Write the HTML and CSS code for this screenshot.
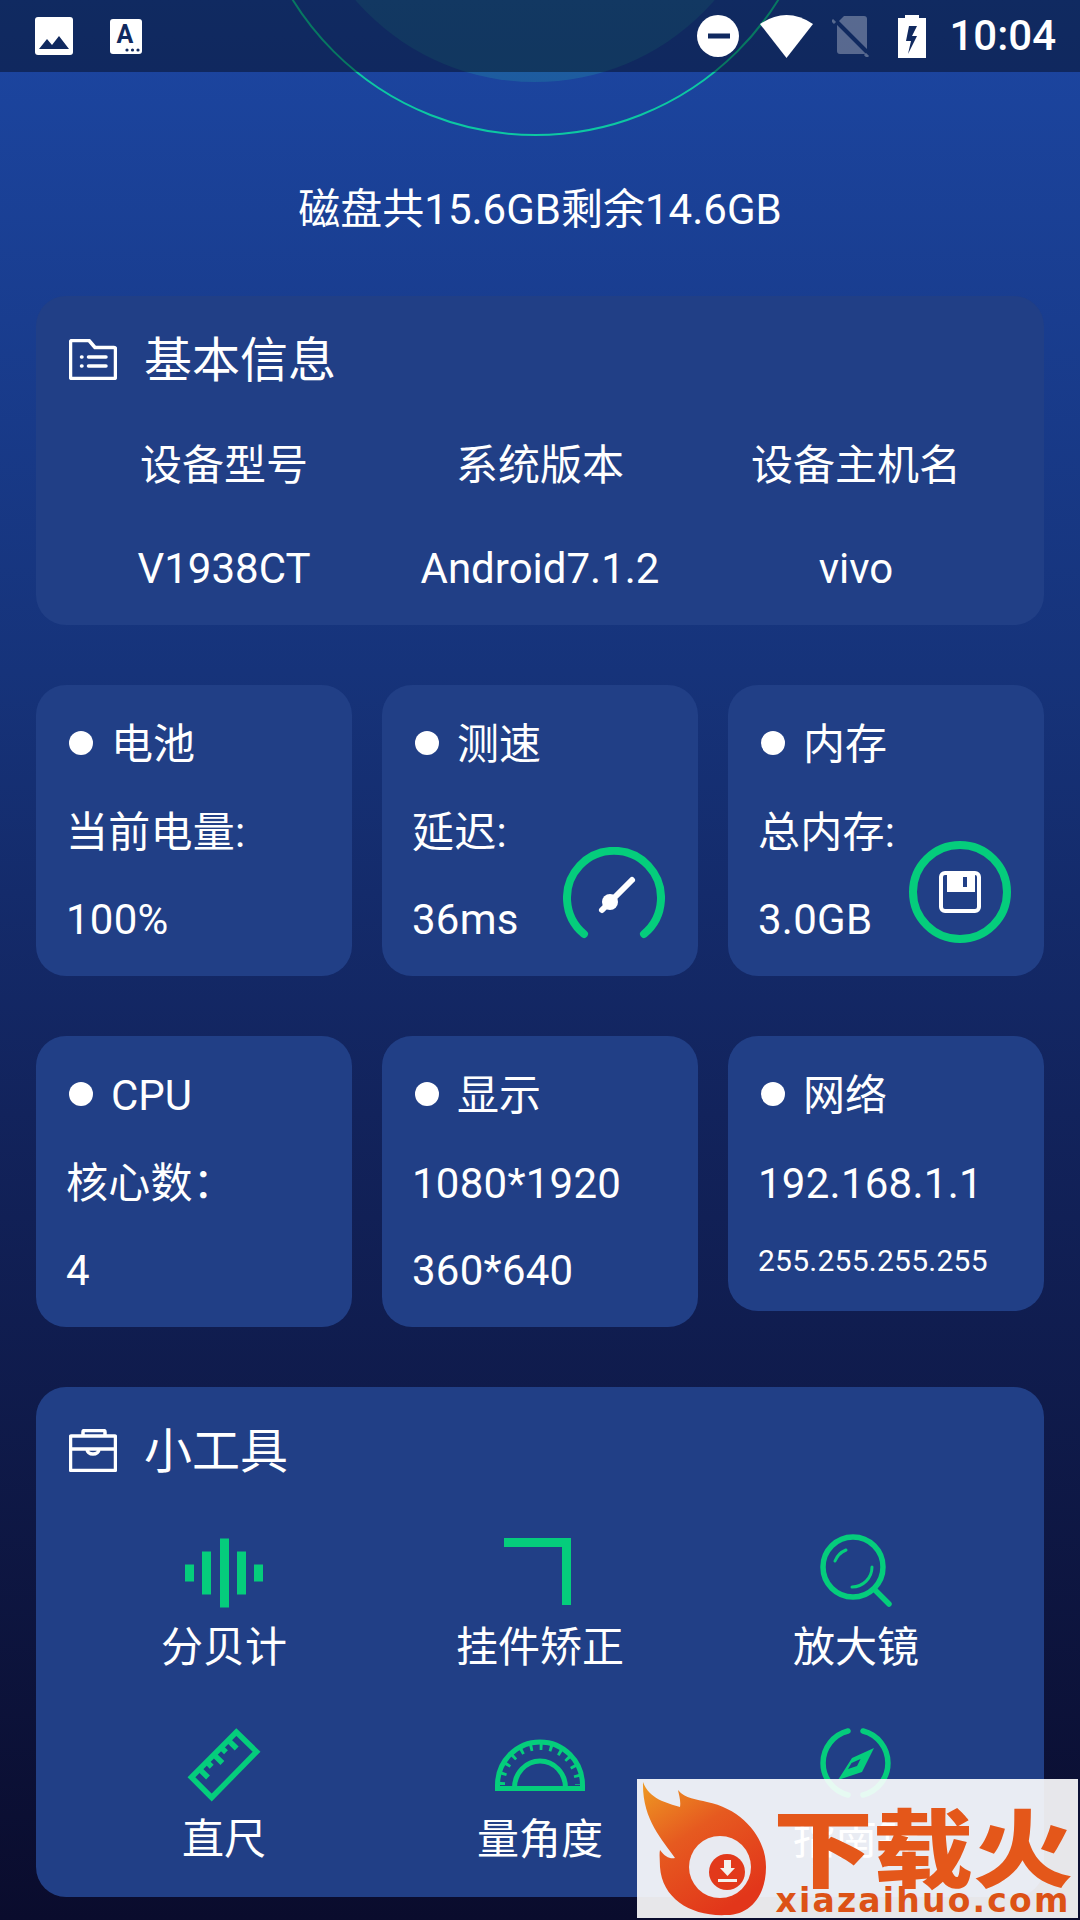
FILE: index.html
```html
<!DOCTYPE html>
<html lang="zh-CN">
<head>
<meta charset="UTF-8">
<meta name="viewport" content="width=device-width, initial-scale=1.0">
<title>设备信息</title>
<link rel="stylesheet" href="styles.css">
</head>
<body>

<div class="halo-fill"></div>
<div class="halo-ring"></div>

<div class="status-bar">
  <svg class="st-icon" width="38" height="38" viewBox="0 0 38 38"><rect width="38" height="38" rx="3" fill="#fff"/><path d="M4 32 12 22 17 28 24 19 34 32Z" fill="#10295f"/></svg>
  <svg class="st-icon" width="32" height="35" viewBox="0 0 32 35"><rect width="32" height="35" rx="3" fill="#fff"/><text x="15" y="24" text-anchor="middle" class="st-a">A</text><circle cx="17" cy="31" r="1.6" fill="#10295f"/><circle cx="22.5" cy="31" r="1.6" fill="#10295f"/><circle cx="28" cy="31" r="1.6" fill="#10295f"/></svg>
  <div class="status-right">
    <svg width="42" height="42" viewBox="0 0 42 42"><circle cx="21" cy="21" r="21" fill="#fff"/><rect x="11" y="18.5" width="22" height="5" fill="#10295f"/></svg>
    <svg width="53" height="43" viewBox="0 0 53 43"><path d="M26.5 43 0 9Q26.5-9 53 9Z" fill="#fff"/></svg>
    <svg width="38" height="41" viewBox="0 0 38 41"><path d="M12 0H32a3 3 0 0 1 3 3V35a3 3 0 0 1-3 3H8a3 3 0 0 1-3-3V7Z" fill="#fff" opacity=".3"/><path d="M2 3 36 37" stroke="#10295f" stroke-width="4"/><path d="M0 4 3 7M33 38 36 41" stroke="#fff" stroke-width="3" opacity=".3"/></svg>
    <svg width="28" height="43" viewBox="0 0 28 43"><path d="M7 0H21V3H28V43H0V3H7Z" fill="#fff"/><path d="M19 11H11L8 26H13L10 39 19 21H14Z" fill="#10295f"/></svg>
    <span class="clock">10:04</span>
  </div>
</div>

<div class="page">
  <div class="disk">磁盘共15.6GB剩余14.6GB</div>

  <section class="panel info-panel">
    <div class="panel-title">
      <svg width="48" height="41" viewBox="0 0 48 41" fill="none" stroke="#fff" stroke-width="3.5" stroke-linejoin="round" stroke-linecap="round"><path d="M3 1.5H20L26 8.5H45A1.5 1.5 0 0 1 46.5 10V38A1.5 1.5 0 0 1 45 39.5H3A1.5 1.5 0 0 1 1.5 38V3A1.5 1.5 0 0 1 3 1.5Z"/><path d="M19.5 18H37M19.5 27H37M12.5 18H13M12.5 27H13"/></svg>
      <span>基本信息</span>
    </div>
    <div class="info-grid">
      <div>设备型号</div><div>系统版本</div><div>设备主机名</div>
      <div>V1938CT</div><div>Android7.1.2</div><div>vivo</div>
    </div>
  </section>

  <div class="tiles">
    <div class="tile">
      <div class="tile-title"><i class="dot"></i>电池</div>
      <div class="tile-line">当前电量:</div>
      <div class="tile-line tile-last">100%</div>
    </div>
    <div class="tile">
      <div class="tile-title"><i class="dot"></i>测速</div>
      <div class="tile-line">延迟:</div>
      <div class="tile-line tile-last">36ms</div>
      <svg class="badge badge-speed" width="102" height="102" viewBox="0 0 102 102" fill="none" stroke-linecap="round"><path d="M21 87A47 47 0 1 1 81 87" stroke="#05cd7c" stroke-width="8"/><path d="M69 33 39 63" stroke="#fff" stroke-width="6"/><circle cx="47" cy="55" r="8" fill="#fff"/></svg>
    </div>
    <div class="tile">
      <div class="tile-title"><i class="dot"></i>内存</div>
      <div class="tile-line">总内存:</div>
      <div class="tile-line tile-last">3.0GB</div>
      <svg class="badge badge-mem" width="102" height="102" viewBox="0 0 102 102" fill="none"><circle cx="51" cy="51" r="47" stroke="#05cd7c" stroke-width="8"/><rect x="32" y="32" width="38" height="38" rx="4" stroke="#fff" stroke-width="4"/><rect x="38" y="33" width="28" height="18" fill="#fff"/><rect x="54" y="36" width="4" height="10" fill="#213f86"/></svg>
    </div>
  </div>

  <div class="tiles">
    <div class="tile">
      <div class="tile-title"><i class="dot"></i>CPU</div>
      <div class="tile-line">核心数：</div>
      <div class="tile-line tile-last">4</div>
    </div>
    <div class="tile">
      <div class="tile-title"><i class="dot"></i>显示</div>
      <div class="tile-line">1080*1920</div>
      <div class="tile-line tile-last">360*640</div>
    </div>
    <div class="tile tile-short">
      <div class="tile-title"><i class="dot"></i>网络</div>
      <div class="tile-line">192.168.1.1</div>
      <div class="tile-line tile-last tile-small">255.255.255.255</div>
    </div>
  </div>

  <section class="panel tools-panel">
    <div class="panel-title">
      <svg width="48" height="43" viewBox="0 0 48 43" fill="none" stroke="#fff" stroke-width="3.5" stroke-linejoin="round"><rect x="1.5" y="7" width="45" height="34.5" rx="1"/><path d="M14 7V3A1.5 1.5 0 0 1 15.5 1.5H34.5A1.5 1.5 0 0 1 36 3V7M1.5 20H46.5M18 20A6 5 0 0 0 30 20"/></svg>
      <span>小工具</span>
    </div>
    <div class="tool-grid">
      <div class="tool">
        <svg width="100" height="84" viewBox="0 0 100 84" fill="#05cd7c"><rect x="11" y="34.5" width="9" height="17"/><rect x="28" y="21.5" width="9" height="43"/><rect x="46" y="8.5" width="9" height="69"/><rect x="63" y="21.5" width="9" height="43"/><rect x="80" y="34.5" width="9" height="17"/></svg>
        <span>分贝计</span>
      </div>
      <div class="tool">
        <svg width="100" height="84" viewBox="0 0 100 84" fill="none" stroke="#05cd7c" stroke-width="9"><path d="M14 12.5H76.5V75"/></svg>
        <span>挂件矫正</span>
      </div>
      <div class="tool">
        <svg width="100" height="84" viewBox="0 0 100 84" fill="none" stroke="#05cd7c" stroke-linecap="round"><circle cx="47" cy="37" r="30" stroke-width="5.5"/><path d="M69 60 83 74" stroke-width="5.5"/><path d="M29 31A20 20 0 0 1 40 20M46 57A20 20 0 0 0 66 37" stroke-width="3"/></svg>
        <span>放大镜</span>
      </div>
      <div class="tool">
        <svg width="100" height="84" viewBox="0 0 100 84" fill="none" stroke="#05cd7c" stroke-width="5.5"><path d="M62.3 10 82.6 29.8 37.7 75.5 17.4 55.2Z"/><path d="M25.5 47.1 34 55.5M32.7 39.8 37.7 44.7M39.9 32.6 48.4 41M47 25.4 52 30.3M54.2 18.1 62.7 26.5"/></svg>
        <span>直尺</span>
      </div>
      <div class="tool">
        <svg width="100" height="84" viewBox="0 0 100 84" fill="none" stroke="#05cd7c" stroke-width="5"><path d="M7.5 66V63A42.5 43 0 0 1 92.5 63V66"/><path d="M5 66.5H95"/><path d="M24.5 66A25.5 27 0 0 1 75.5 66"/><path d="M11.5 63A38.5 38.5 0 0 1 88.5 63" stroke-width="7" stroke-dasharray="3 7"/></svg>
        <span>量角度</span>
      </div>
      <div class="tool">
        <svg width="100" height="84" viewBox="0 0 100 84" fill="none" stroke="#05cd7c" stroke-width="5.5" stroke-linecap="round"><path d="M57 9A33 33 0 0 1 57 73M42 73A33 33 0 0 1 42 9"/><path d="M68 26 46 36 32 58 56 50ZM54.5 37 45.5 41 42 47 51 44Z" fill="#05cd7c" fill-rule="evenodd" stroke="none"/></svg>
        <span>指南针</span>
      </div>
    </div>
  </section>
</div>

<div class="watermark">
  <svg class="wm-logo" width="131" height="139" viewBox="0 0 131 139">
    <defs><linearGradient id="flame" x1="0" y1="0" x2=".6" y2="1"><stop offset="0" stop-color="#ee9a22"/><stop offset=".45" stop-color="#e65a20"/><stop offset="1" stop-color="#e2361a"/></linearGradient></defs>
    <path d="M6 3C12 20 30 24 43 28 44 22 42 16 41 11 48 20 60 20 70 23 105 30 129 58 129 88 129 118 112 136 90 136 55 138 25 120 23 88 23 82 22 76 23 71 28 78 33 80 38 79 25 60 5 40 6 3Z" fill="url(#flame)"/>
    <circle cx="83" cy="88" r="31" fill="#e8eaf1"/>
    <circle cx="90" cy="93" r="18" fill="#e2391b"/>
    <path d="M87 81H94V89H98L90.5 97 83 89H87ZM81 100H100V103H81Z" fill="#f3f1ee"/>
  </svg>
  <div class="wm-text">
    <div class="wm-name">下载火</div>
    <div class="wm-url">xiazaihuo.com</div>
  </div>
</div>

</body>
</html>
```

FILE: styles.css
```css
* { box-sizing: border-box; }
html, body { margin: 0; padding: 0; }
body { position: relative; width: 1080px; height: 1920px; overflow: hidden; color: #fff; font-family: Roboto, "Noto Sans CJK SC", sans-serif; font-size: 42px; line-height: 49px; background: linear-gradient(180deg, #1c46a2 0%, #16337a 35%, #12235c 58%, #0a0c2d 100%); }

.halo-fill { position: absolute; left: 297px; top: -394px; width: 476px; height: 476px; border-radius: 50%; background: rgba(40, 190, 170, 0.2); }
.halo-ring { position: absolute; left: 249px; top: -437px; width: 573px; height: 573px; border-radius: 50%; border: 2.5px solid #0dc8a2; }

.status-bar { position: relative; display: flex; align-items: center; height: 72px; padding: 0 24px 0 35px; gap: 37px; background: rgba(0, 0, 0, 0.4); }
.st-a { font-family: Roboto, sans-serif; font-weight: 700; font-size: 25px; fill: #10295f; }
.status-right { display: flex; align-items: center; margin-left: auto; }
.status-right svg:nth-child(1) { margin-right: 21px; }
.status-right svg:nth-child(2) { margin-right: 19px; }
.status-right svg:nth-child(3) { margin-right: 28px; }
.status-right svg:nth-child(4) { margin-right: 23px; }
.clock { font-size: 42px; line-height: 42px; font-weight: 500; }

.page { position: relative; padding: 0 36px; }
.disk { margin-top: 113px; text-align: center; }

.panel { border-radius: 30px; background: #213f86; padding: 35px 30px 32px; }
.info-panel { margin-top: 62px; }
.tools-panel { margin-top: 60px; padding-bottom: 33px; }
.panel-title { display: flex; align-items: center; gap: 27px; height: 56px; padding-left: 3px; font-size: 48px; }
.panel-title span { padding-top: 2px; }
.info-grid { display: grid; grid-template-columns: repeat(3, 316px); row-gap: 54px; margin-top: 54px; text-align: center; }

.tiles { display: grid; grid-template-columns: repeat(3, 316px); gap: 30px; margin-top: 60px; align-items: start; }
.tile { position: relative; height: 291px; padding: 34px 10px 0 30px; border-radius: 30px; background: #213f86; }
.tile-short { height: 275px; }
.tile-title { display: flex; align-items: center; gap: 18px; height: 49px; padding-top: 2px; }
.dot { display: block; width: 24px; height: 24px; margin: 0 0 4px 3px; border-radius: 50%; background: #fff; }
.tile-line { margin-top: 40px; letter-spacing: 0.25px; }
.tile-last { margin-top: 38px; }
.tile-small { font-size: 30px; line-height: 30px; }
.badge { position: absolute; }
.badge-speed { right: 33px; bottom: 27px; }
.badge-mem { right: 33px; bottom: 33px; }

.tool-grid { display: grid; grid-template-columns: repeat(3, 316px); row-gap: 50px; margin-top: 52px; }
.tool { display: flex; flex-direction: column; align-items: center; gap: 9px; text-align: center; }
.tool svg { display: block; }

.watermark { position: absolute; left: 637px; top: 1779px; width: 441px; height: 139px; display: flex; background: rgba(255, 255, 255, 0.9); }
.wm-logo { flex: none; }
.wm-text { display: flex; flex-direction: column; align-items: center; width: 310px; color: #e4571a; }
.wm-name { height: 85px; margin-top: 23px; font-family: "Noto Sans CJK SC", sans-serif; font-weight: 900; font-size: 100px; line-height: 100px; white-space: nowrap; transform: scaleY(0.85); transform-origin: top; }
.wm-url { font-family: "DejaVu Sans", sans-serif; font-weight: 700; font-size: 33px; line-height: 28px; letter-spacing: 2.2px; white-space: nowrap; color: #dc5216; }
```
